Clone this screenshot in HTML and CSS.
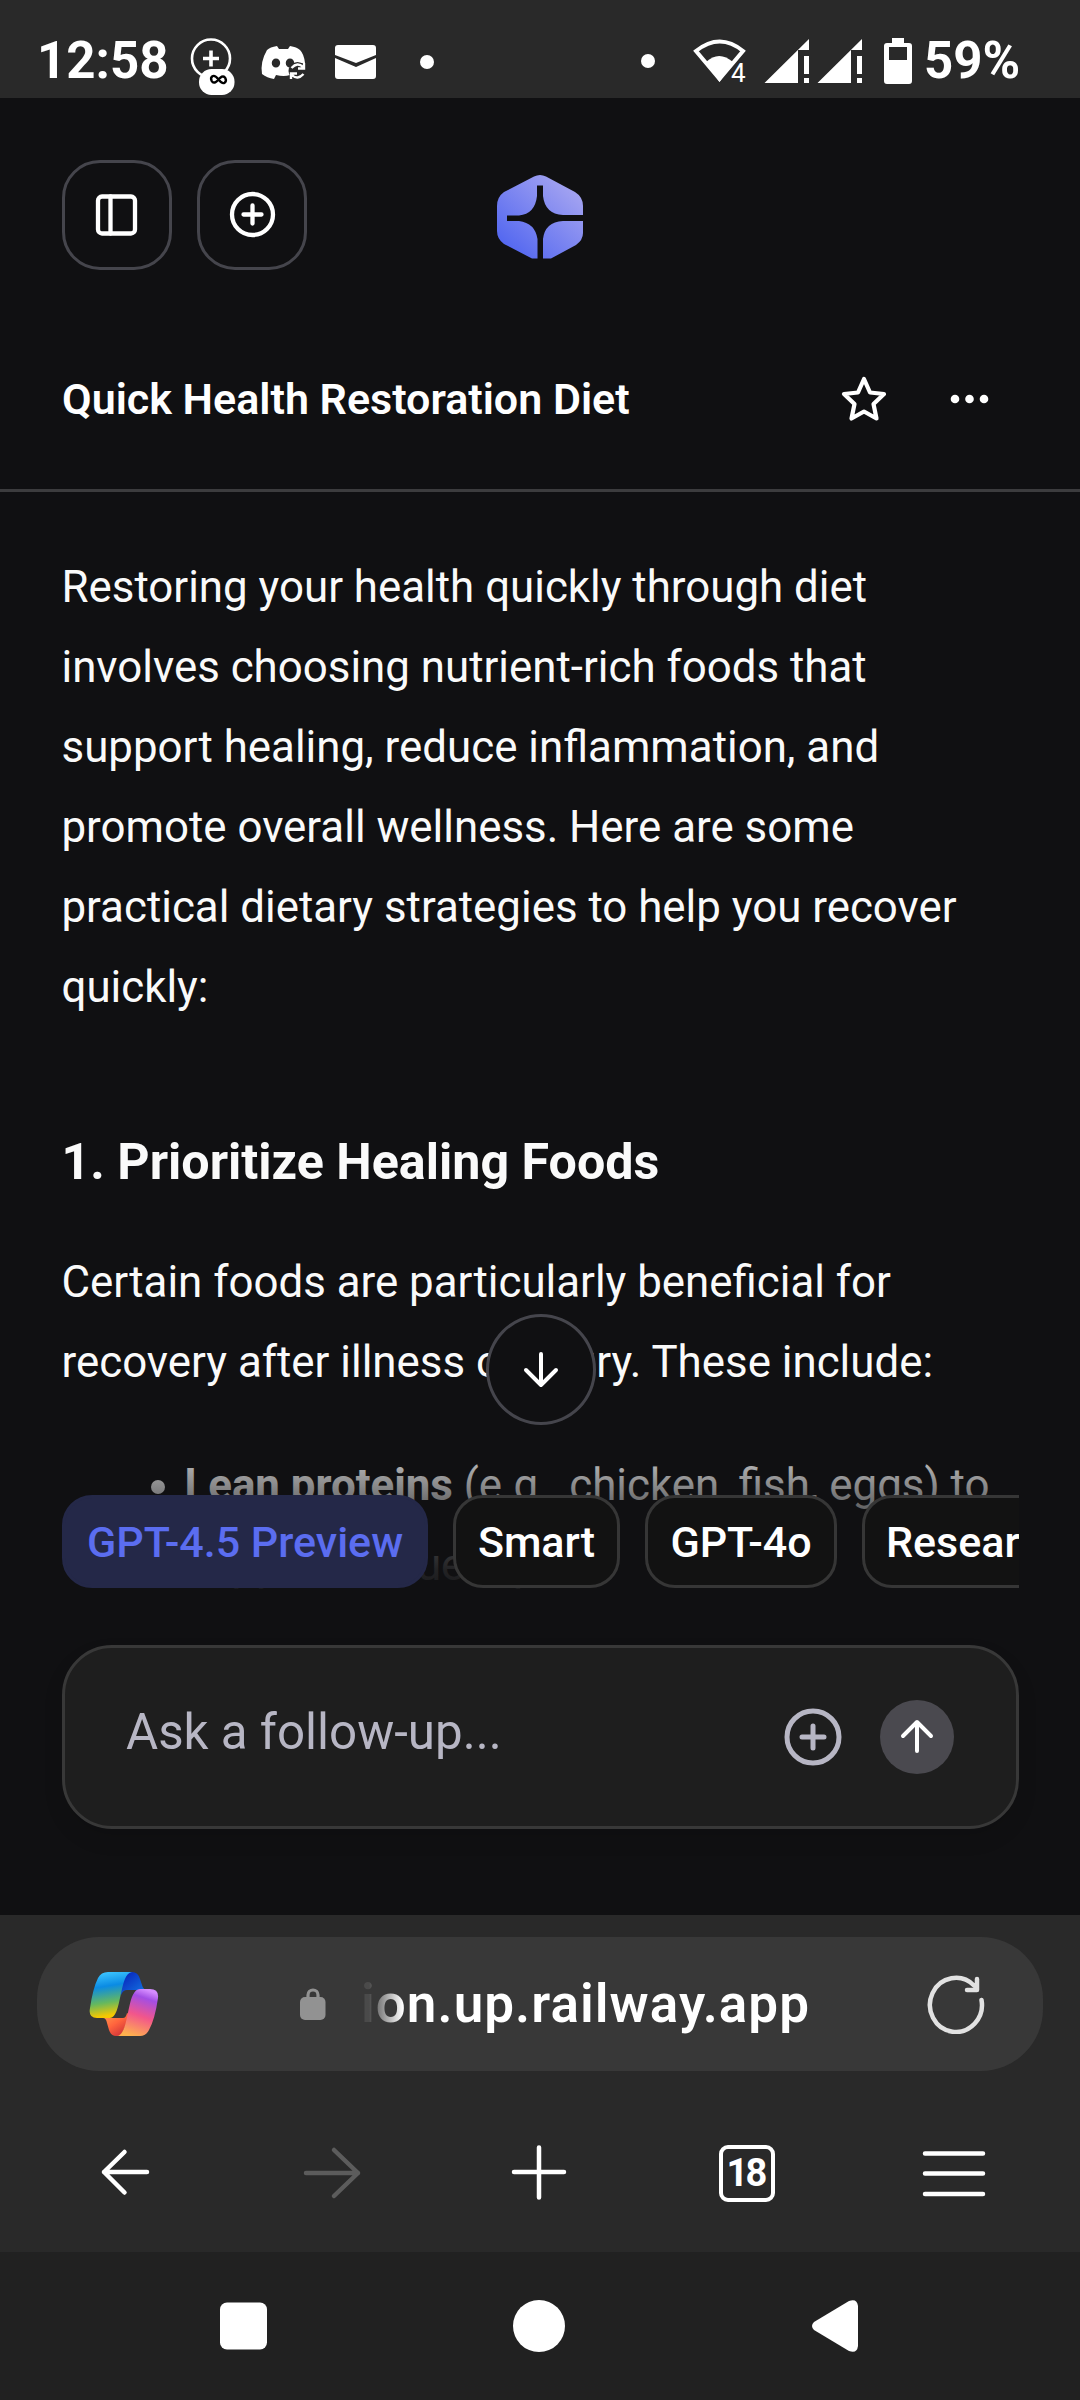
FILE: index.html
```html
<!DOCTYPE html>
<html lang="en">
<head>
<meta charset="utf-8">
<title>Quick Health Restoration Diet</title>
<link rel="stylesheet" href="styles.css">
</head>
<body>
<div class="phone">
  <header class="status">
    <span class="clock">12:58</span>
    <svg class="status-left" width="250" height="98" viewBox="190 0 250 98">
      <circle cx="211" cy="58.500" r="19" fill="none" stroke="#fff" stroke-width="2.600"/>
      <path d="M211 50.500v16M203 58.500h16" stroke="#fff" stroke-width="3.600"/>
      <rect x="199" y="69" width="35.500" height="26" rx="12.500" fill="#fff"/>
      <path d="M218.500 79.500c-5.500-7-8.500-2-6.800 1.500 2 3.500 5 .5 6.800-1.500 1.800-2 4.800-5 6.800-1.500 1.700 3.500-1.300 8.500-6.800 1.500z" fill="none" stroke="#000" stroke-width="2.400"/>
      <path fill="#fff" d="M277 46q-7 1-10 4-7 12-5 24 5 4 12 5l2-4q8 2 14 0v-8l5-4h10q-1-9-5-13-3-3-10-4l-2 3h-9zM276 58.500a4.200 4.500 0 1 1-.1 9 4.200 4.500 0 1 1 .1-9zM290 58.500a4.200 4.500 0 1 1-.1 9 4.200 4.500 0 1 1 .1-9z" fill-rule="evenodd"/>
      <circle cx="297.500" cy="71" r="9" fill="#292929"/>
      <path d="M291.500 68q6-6.500 11.500-1m1-4v5.500h-6M303.500 74q-6 6.500-11.500 1m-1 4v-5.500h6" fill="none" stroke="#fff" stroke-width="2.400"/>
      <path fill="#fff" d="M335 48q0-3 3-3h35q3 0 3 3v7l-20 8-21-8zM335 58l21 9 20-9v18q0 3-3 3h-35q-3 0-3-3z"/>
      <circle cx="427" cy="62" r="7" fill="#fff"/>
    </svg>
    <svg class="status-right" width="284" height="98" viewBox="636 0 284 98">
      <circle cx="648" cy="61" r="7" fill="#fff"/>
      <path d="M696 51q24-19 47 0l-23.500 28z" fill="none" stroke="#fff" stroke-width="4"/>
      <path d="M706 62q13-12 27 0l-13.500 20z" fill="#fff"/>
      <text x="731" y="82" class="wifi-gen">4</text>
      <g fill="#fff"><path id="sig" d="M764.500 83 809 39v11H798V83zM804 56h5v18h-5zM804 78h5v5h-5z"/><use href="#sig" x="53"/>
      <path fill-rule="evenodd" d="M892 38h12v5h5q3 0 3 3v35q0 3-3 3h-22q-3 0-3-3V46q0-3 3-3h5zM889 47v13h18V47z"/></g>
    </svg>
    <span class="battery">59%</span>
  </header>

  <main class="app">
    <div class="topbar">
      <button class="square-btn"><svg width="66" height="66" viewBox="0 0 66 66"><rect x="14" y="14.500" width="37" height="37" rx="4"/><path d="M26.500 14.500v37"/></svg></button>
      <button class="square-btn"><svg width="66" height="66" viewBox="0 0 66 66"><circle cx="33.500" cy="32.500" r="20.500"/><path d="M33.500 23.500v18M24.500 32.500h18"/></svg></button>
      <svg class="logo" width="86" height="84" viewBox="0 0 86 84">
        <defs><linearGradient id="lg" x1=".15" y1=".9" x2=".85" y2=".15"><stop offset="0" stop-color="#5468f0"/><stop offset="1" stop-color="#a2a2f1"/></linearGradient></defs>
        <path fill="url(#lg)" d="M37 1.500q6-3 12 0L78 17q8 5 8 14v9H66Q48 39 46 21V10.500H40V21Q38 39 22 40.500H10v5.500H22Q38 48 40.500 64V83.500H35L7 69q-7-5-7-13V31Q0 22 7 17zM86 46v12q0 7-7 12L54 83.500H46V64Q48 47 66 46z"/>
      </svg>
    </div>
    <div class="title-row">
      <h1>Quick Health Restoration Diet</h1>
      <svg class="star" width="48" height="48" viewBox="0 0 48 48"><path d="M24 4l6 13.500 14 1.500-10.500 10 3 14.500L24 36.500 11.500 43.500l3-14.500L4 19l14-1.500z"/></svg>
      <svg class="dots" width="40" height="10" viewBox="0 0 40 10"><circle cx="5" cy="5" r="4.300"/><circle cx="19.500" cy="5" r="4.300"/><circle cx="34" cy="5" r="4.300"/></svg>
    </div>
    <article class="answer">
      <p>Restoring your health quickly through diet<br>involves choosing nutrient-rich foods that<br>support healing, reduce inflammation, and<br>promote overall wellness. Here are some<br>practical dietary strategies to help you recover<br>quickly:</p>
      <h2>1. Prioritize Healing Foods</h2>
      <p class="second">Certain foods are particularly beneficial for<br>recovery after illness or injury. These include:</p>
      <ul><li><b>Lean proteins</b> (e.g., chicken, fish, eggs) to<br>support tissue repair.</li></ul>
    </article>
    <div class="dock">
      <button class="scroll-btn"><svg width="44" height="44" viewBox="0 0 44 44"><path d="M22 6v31M7 22l15 15 15-15"/></svg></button>
      <div class="chips">
        <span class="chip active">GPT-4.5 Preview</span><span class="chip c2">Smart</span><span class="chip c3">GPT-4o</span><span class="chip c4">Research</span>
      </div>
      <div class="composer">
        <span class="placeholder">Ask a follow-up...</span>
        <svg class="attach" width="58" height="58" viewBox="0 0 58 58"><circle cx="29" cy="29" r="26"/><path d="M29 18v22M18 29h22"/></svg>
        <span class="send"><svg width="44" height="44" viewBox="0 0 44 44"><path d="M22 36V8M8 21L22 7l14 14"/></svg></span>
      </div>
    </div>
  </main>

  <section class="browser">
    <div class="address">
      <svg class="copilot" width="70" height="66" viewBox="0 0 70 66">
        <defs>
          <linearGradient id="ca" x1=".4" y1="0" x2=".55" y2="1"><stop offset="0" stop-color="#3bc4ff"/><stop offset=".3" stop-color="#0a8be4"/><stop offset=".65" stop-color="#66b85e"/><stop offset=".93" stop-color="#f6c800"/></linearGradient>
          <linearGradient id="cb" x1="0" y1="0" x2="1" y2="1"><stop offset=".2" stop-color="#0a30c0"/><stop offset="1" stop-color="#147fe8"/></linearGradient>
          <linearGradient id="cc" x1=".65" y1="0" x2=".35" y2="1"><stop offset="0" stop-color="#d58cff"/><stop offset=".17" stop-color="#a34ee4"/><stop offset=".55" stop-color="#f2568b"/><stop offset="1" stop-color="#ffb24d"/></linearGradient>
          <linearGradient id="cd" x1="0" y1="0" x2=".8" y2="1"><stop offset="0" stop-color="#ffa04e"/><stop offset=".5" stop-color="#ff643d"/><stop offset="1" stop-color="#c92c38"/></linearGradient>
        </defs>
        <path fill="url(#cb)" d="M32 1h11q6 0 8 7l2 6q1 5 6 5H38q-4 0-6 5z"/>
        <path fill="url(#cd)" d="M14 47h20q3 0 4-5l3 2-9 21h-5q-5 0-7-6l-2-7q-1-5-4-5z"/>
        <path fill="url(#ca)" d="M19 1h24c-13 1-10 46-22 46H8Q-1 47 1 37 4 17 9 7q3-6 10-6z"/>
        <path fill="url(#cc)" d="M51 18h10q9 0 8 9-3 21-9 32-3 6-9 6H28c13-1 9-47 23-47z"/>
      </svg>
      <svg class="lock" width="26" height="34" viewBox="0 0 26 34"><path d="M8 12V8a5 5 0 0 1 10 0v4" fill="none" stroke="#929292" stroke-width="3.200"/><rect y="10" width="25.500" height="23" rx="5" fill="#929292"/></svg>
      <span class="url">ion.up.railway.app</span>
      <svg class="reload" width="60" height="60" viewBox="0 0 60 60"><path d="M54.500 26A26 27 0 1 1 47 11.500M50 5v11H40"/></svg>
    </div>
    <nav class="tools">
      <svg viewBox="0 0 60 60"><path d="M52 29H9M29.500 9L9 29l20.500 20.500"/></svg>
      <svg class="off" viewBox="0 0 60 60"><path d="M4 30h52M32 7l24 23-24 23"/></svg>
      <svg viewBox="0 0 60 60"><path d="M30 4.500v50M5 29h50"/></svg>
      <span class="tabs">18</span>
      <svg class="menu" viewBox="0 0 66 60"><path d="M4 10.500h58M4 30.500h58M4 51h58"/></svg>
    </nav>
  </section>
  <footer class="system">
    <svg viewBox="0 0 60 60"><rect x="7" y="6.500" width="47" height="47" rx="7"/></svg>
    <svg viewBox="0 0 60 60"><circle cx="30" cy="30" r="26"/></svg>
    <svg viewBox="0 0 60 60"><path d="M9 26L44 5q8-3 9 5v40q-1 8-9 5L9 34q-4-4 0-8z"/></svg>
  </footer>
</div>
</body>
</html>
```
FILE: styles.css
```css
* { box-sizing: border-box; }
body { margin: 0; background: #101012; }
button { padding: 0; font: inherit; }
svg { display: block; flex: none; }
.phone { width: 1080px; height: 2400px; overflow: hidden; display: flex; flex-direction: column; font-family: Roboto, "Liberation Sans", sans-serif; color: #fff; }

.status { height: 98px; flex: none; background: #292929; display: flex; align-items: flex-start; }
.clock, .battery { font-weight: 700; font-size: 51px; line-height: 58px; padding-top: 32px; white-space: nowrap; }
.clock { width: 152px; padding-left: 37px; }
.status-left { margin-left: 38px; }
.status-right { margin-left: 196px; }
.battery { margin-left: 4px; }
.wifi-gen { font-size: 26px; fill: #fff; stroke: #292929; stroke-width: 3px; paint-order: stroke; }

.app { height: 1817px; flex: none; position: relative; overflow: hidden; background: #101012; }
.topbar { display: flex; padding: 62px 62px 0; height: 230px; }
.square-btn { width: 110px; height: 110px; border: 3px solid #45454c; border-radius: 38px; background: none; display: flex; align-items: center; justify-content: center; margin-right: 25px; }
.square-btn svg { fill: none; stroke: #fff; stroke-width: 4.3; stroke-linecap: round; }
.logo { margin: 15px 0 0 165px; }
.title-row { height: 164px; border-bottom: 3px solid #3c3c3e; padding: 0 90px 20px 62px; display: flex; align-items: center; }
h1 { margin: 0; flex: 1; font-size: 43px; font-weight: 600; line-height: 60px; white-space: nowrap; }
.star { fill: none; stroke: #fff; stroke-width: 4.2; stroke-linejoin: round; margin-right: 62px; }
.dots { fill: #fff; }

.answer { padding: 55px 61px 0 61.5px; font-size: 43.85px; line-height: 80px; color: #fafafa; white-space: nowrap; }
.answer p { margin: 0; }
.answer h2 { margin: 95px 0 0; font-size: 50.2px; line-height: 80px; font-weight: 700; }
.answer .second { margin-top: 40px; }
.answer ul { margin: 43px 0 0; padding: 0 0 0 123px; }

.dock { position: absolute; left: 0; right: 0; bottom: 0; padding: 0 61px 86px 62px; background: linear-gradient(to bottom, rgba(16,16,18,0) 110px, rgba(16,16,18,.36) 156px, rgba(16,16,18,.62) 190px, rgba(16,16,18,.92) 256px, #101012 300px); }
.scroll-btn { display: flex; align-items: center; justify-content: center; width: 110px; height: 111px; margin: 0 auto; border: 3px solid #45454c; border-radius: 50%; background: #101012; }
.scroll-btn svg, .send svg { fill: none; stroke: #fff; stroke-width: 4; stroke-linecap: round; stroke-linejoin: round; }
.chips { display: flex; gap: 25px; margin-top: 70px; overflow: hidden; }
.chip { flex: none; height: 93px; border: 3px solid #363636; border-radius: 30px; background: #121212; font-size: 43px; font-weight: 500; line-height: 88px; text-align: center; white-space: nowrap; }
.chip.active { width: 366px; background: #242848; border-color: #242848; color: #5b6df0; }
.c2 { width: 167px; }
.c3 { width: 192px; }
.c4 { width: 240px; text-align: left; padding-left: 21px; }
.composer { height: 184px; margin-top: 57px; border: 3px solid #383838; border-radius: 50px; background: #1e1e1e; display: flex; align-items: center; padding: 0 62px 0 61px; box-shadow: 0 10px 20px rgba(0,0,0,.1); }
.placeholder { flex: 1; font-size: 49.3px; line-height: 60px; padding-bottom: 10px; color: #b7b6c4; }
.attach { fill: none; stroke: #b7b6c4; stroke-width: 5; stroke-linecap: round; margin-right: 38px; }
.send { width: 74px; height: 74px; border-radius: 50%; background: #4a494f; display: flex; align-items: center; justify-content: center; }

.browser { height: 337px; flex: none; background: #292929; padding: 22px 37px 0; }
.address { height: 134px; border-radius: 62px; background: #383838; display: flex; align-items: center; padding: 0 56px 1px 52px; }
.lock { margin-left: 141px; }
.url { margin-left: 35px; width: 560px; font-size: 53px; font-weight: 600; letter-spacing: 1.05px; line-height: 70px; white-space: nowrap; color: transparent; background: linear-gradient(to right, #4a4a4a 8px, #fff 42px); background-clip: text; -webkit-background-clip: text; }
.reload { margin-left: auto; fill: none; stroke: #e2e2e2; stroke-width: 4.5; stroke-linecap: round; stroke-linejoin: round; }
.tools { display: grid; grid-template-columns: repeat(5, 1fr); align-items: center; justify-items: center; margin: 72px -15px 0 -16px; }
.tools svg { width: 60px; height: 60px; fill: none; stroke: #fff; stroke-width: 4.5; stroke-linecap: round; stroke-linejoin: round; }
.tools .menu { width: 66px; }
.tools .off { stroke: #5c5c5c; }
.tabs { width: 56px; height: 57px; border: 4px solid #fff; border-radius: 9px; font-size: 38px; font-weight: 700; line-height: 49px; text-align: center; letter-spacing: -3px; text-indent: -3px; }
.system { flex: 1; background: #212121; display: flex; justify-content: space-between; padding: 44px 215px 0 212.5px; }
.system svg { width: 60px; height: 60px; fill: #fff; }
```
